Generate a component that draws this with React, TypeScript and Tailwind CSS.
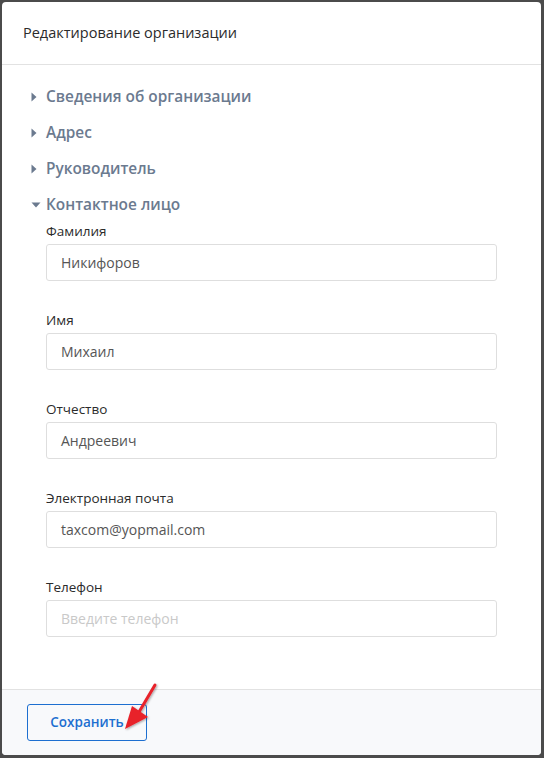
import React from "react";

const font = { fontFamily: '"Open Sans", "Noto Sans", sans-serif' };

function Caret({ open }: { open?: boolean }) {
  return open ? (
    <svg width="10" height="6" viewBox="0 0 10 6" className="shrink-0">
      <path d="M0.5 0.5 L9.5 0.5 L5 5.5 Z" fill="#6b7a8f" />
    </svg>
  ) : (
    <svg width="6" height="10" viewBox="0 0 6 10" className="shrink-0">
      <path d="M0.5 0.5 L5.5 5 L0.5 9.5 Z" fill="#6b7a8f" />
    </svg>
  );
}

function Section({ title, open }: { title: string; open?: boolean }) {
  return (
    <div className="h-[36px] flex items-center">
      <div className="w-[16px] flex justify-start items-center pl-[1px]">
        <Caret open={open} />
      </div>
      <span className="text-[15.4px] font-semibold text-[#6b7a8f] leading-none">{title}</span>
    </div>
  );
}

function Field({ label, value, placeholder }: { label: string; value?: string; placeholder?: string }) {
  return (
    <div className="flex flex-col mb-[30px]">
      <div className="text-[13.5px] leading-[18px] font-medium text-[#2b2b2b] mb-[4px]">{label}</div>
      <div className="h-[37px] border border-[#dedede] rounded-[3px] flex items-center px-[14px]">
        {value ? (
          <span className="text-[14px] text-[#555555]">{value}</span>
        ) : (
          <span className="text-[14px] text-[#c9c9c9]">{placeholder}</span>
        )}
      </div>
    </div>
  );
}

export default function App() {
  return (
    <div className="w-[544px] h-[758px] bg-[#4b4b4b] pt-[2px] pl-[2px] pr-[3px] pb-[3px]" style={font}>
      <div className="relative w-full h-full bg-white rounded-[4px] flex flex-col overflow-hidden">
        <div className="h-[63px] shrink-0 border-b border-[#e2e2e2] flex items-center pl-[21px]">
          <span className="text-[14.5px] text-[#2b2b2b]">Редактирование организации</span>
        </div>
        <div className="flex-1 pt-[14px] pl-[28px] pr-[44px]">
          <Section title="Сведения об организации" />
          <Section title="Адрес" />
          <Section title="Руководитель" />
          <Section title="Контактное лицо" open />
          <div className="pl-[16px] -mt-[1px]">
            <Field label="Фамилия" value="Никифоров" />
            <Field label="Имя" value="Михаил" />
            <Field label="Отчество" value="Андреевич" />
            <Field label="Электронная почта" value="taxcom@yopmail.com" />
            <Field label="Телефон" placeholder="Введите телефон" />
          </div>
        </div>
        <div className="h-[66px] shrink-0 border-t border-[#e2e2e2] bg-[#f8f9fb] pt-[14px] pl-[25px]">
          <button className="w-[120px] h-[37px] border border-[#1d6fd0] rounded-[3px] bg-transparent text-[13.5px] font-semibold text-[#1d6fd0]">
            Сохранить
          </button>
        </div>
        <svg className="absolute left-[110px] top-[672px]" width="60" height="64" viewBox="0 0 60 64">
          <defs>
            <filter id="sh" x="-30%" y="-30%" width="160%" height="160%">
              <feDropShadow dx="1" dy="1" stdDeviation="1" floodColor="#000" floodOpacity="0.35" />
            </filter>
          </defs>
          <g filter="url(#sh)">
            <line x1="43" y1="11" x2="27" y2="38" stroke="#e8202a" strokeWidth="3" strokeLinecap="round" />
            <path d="M13 55 L20 32 L36 43 Z" fill="#e8202a" />
          </g>
        </svg>
      </div>
    </div>
  );
}
